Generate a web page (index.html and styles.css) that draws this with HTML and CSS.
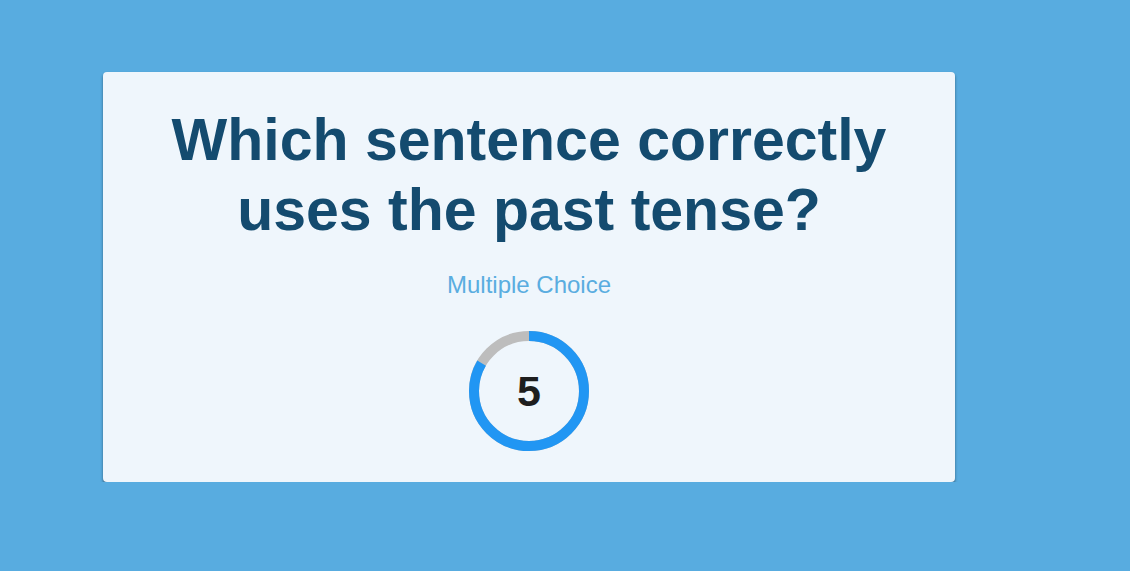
FILE: index.html
```html
<!DOCTYPE html>
<html>
<head>
    <title>Quiz Question</title>
    <link rel="stylesheet" href="styles.css">
</head>
<body>
    <div class="question-card">
        <h1 class="question-title">Which sentence correctly uses the past tense?</h1>
        <p class="question-type">Multiple Choice</p>
        <div class="timer">
            <svg class="timer-ring" width="120" height="120" viewBox="0 0 120 120">
                <circle cx="60" cy="60" r="55" fill="none" stroke="#bdbdbd" stroke-width="10"/>
                <circle cx="60" cy="60" r="55" fill="none" stroke="#2196f3" stroke-width="10"
                        stroke-dasharray="288 346" transform="rotate(-90 60 60)"/>
            </svg>
            <span class="timer-value">5</span>
        </div>
    </div>
</body>
</html>
```

FILE: styles.css
```css
body {
    font-family: "Liberation Sans", Arial, sans-serif;
    background-color: #58ace0;
    margin: 0;
    padding: 0;
}

.question-card {
    width: 852px;
    height: 410px;
    margin: 72px 0 0 103px;
    background-color: #eff6fc;
    border-radius: 4px;
    box-shadow: 0 2px 3px rgba(0, 0, 0, 0.45);
    box-sizing: border-box;
    padding: 33px 20px 0;
    display: flex;
    flex-direction: column;
    align-items: center;
}

.question-title {
    margin: 0;
    color: #144b6f;
    font-size: 59px;
    line-height: 70px;
    font-weight: bold;
    text-align: center;
    max-width: 800px;
}

.question-type {
    margin: 26px 0 0;
    color: #5aade0;
    font-size: 24px;
}

.timer {
    position: relative;
    width: 120px;
    height: 120px;
    margin-top: 32px;
}

.timer-ring {
    display: block;
}

.timer-value {
    position: absolute;
    inset: 0;
    display: flex;
    align-items: center;
    justify-content: center;
    font-size: 43px;
    font-weight: bold;
    color: #1e1e1e;
}
```
